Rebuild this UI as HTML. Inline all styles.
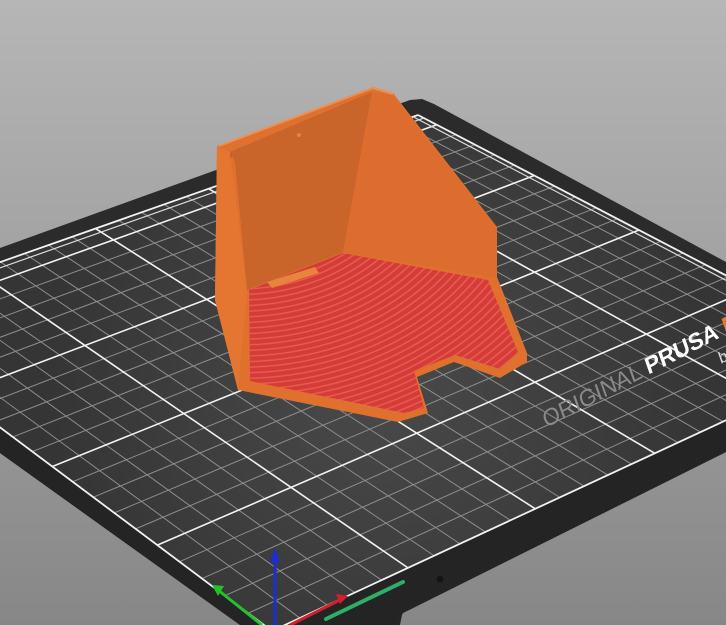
<!DOCTYPE html>
<html><head><meta charset="utf-8">
<style>
html,body{margin:0;padding:0;width:726px;height:625px;overflow:hidden;}
svg{display:block}
</style></head>
<body>
<svg id="s" width="726" height="625" viewBox="0 0 726 625" xmlns="http://www.w3.org/2000/svg">
<defs>
<linearGradient id="bg" x1="0" y1="0" x2="0" y2="1">
<stop offset="0" stop-color="#b6b6b6"/><stop offset="1" stop-color="#878787"/>
</linearGradient>
<radialGradient id="surf" cx="380" cy="380" r="330" gradientUnits="userSpaceOnUse">
<stop offset="0" stop-color="#4a4a4a"/><stop offset="1" stop-color="#353535"/>
</radialGradient>
<radialGradient id="rings" cx="240" cy="150" r="7" gradientUnits="userSpaceOnUse" spreadMethod="repeat" gradientTransform="translate(240 150) scale(1 0.8) translate(-240 -150)">
<stop offset="0" stop-color="#d63c37"/><stop offset="0.6" stop-color="#d63c37"/><stop offset="0.8" stop-color="#e9645a"/><stop offset="1" stop-color="#d63c37"/>
</radialGradient>
<clipPath id="gc"><polygon id="gq" points="0,0"/></clipPath>
</defs>
<rect width="726" height="625" fill="url(#bg)"/>
<polygon points="360,600 405,600 400,625 360,625" fill="#262626"/>
<polygon points="0,248 410,100 422,99 434,104 726,262 726,452 403,613 396,625 240,625 0,453" fill="#2b2b2b"/>
<polygon points="0,427 272,631 726,420 726,452 403,613 396,625 240,625 0,453" fill="#242424"/>
<polygon id="surface" points="0,0" fill="url(#surf)"/>
<g id="grid" clip-path="url(#gc)"></g>
<g id="border"></g>
<g transform="translate(546,428) rotate(-27.5) skewX(-8)">
<text x="0" y="0" font-family="Liberation Sans, sans-serif" font-size="23" fill="#8a8a8a">ORIGINAL <tspan fill="#ffffff" font-weight="bold">PRUSA</tspan> <tspan fill="#ee7a20" font-weight="bold">MK3</tspan></text>
<text x="188" y="24" font-family="Liberation Sans, sans-serif" font-size="16" fill="#dddddd">by Josef Prusa</text>
</g>
<line x1="326" y1="619" x2="403" y2="582" stroke="#2fae6a" stroke-width="4" stroke-linecap="round"/>
<circle cx="440" cy="579" r="3.5" fill="#151515"/>
<polygon points="217,146 373,87 393,93 497,227 497,277 527,353 527,362 500,378 454,362 417,377 428,413 398,422 238,390 215,300" fill="#e0702e"/>
<polygon points="230,152 372,92 343,252 247,290 235,162" fill="#c9642b"/>
<polygon points="372,92 392,95 497,228 497,278 343,252" fill="#dd6d2f"/>
<polyline points="219,146 373,88 393,94" fill="none" stroke="#f09050" stroke-width="2"/>
<polygon points="222,150 232,154 230,165" fill="#d8443a"/>
<polygon points="217,146 230,152 247,290 238,390 215,300" fill="#e47632"/>
<polygon points="249,290 343,253 488,280 518,352 500,369 455,355 414,371 424,408 404,413 250,381" fill="url(#rings)"/>
<polygon points="267,282 315,267 319,273 272,288" fill="#e8843c"/>
<circle cx="299" cy="135" r="2" fill="#e8843c"/>
<line x1="275" y1="625" x2="275" y2="560" stroke="#1a2fd0" stroke-width="3"/>
<polygon points="270,562 280,562 275,548" fill="#1a2fd0"/>
<line x1="262" y1="625" x2="218" y2="590" stroke="#22c22a" stroke-width="3"/>
<polygon points="212,585 224,586 218,596" fill="#22c22a"/>
<line x1="290" y1="625" x2="340" y2="600" stroke="#d0202a" stroke-width="3"/>
<polygon points="348,596 336,594 340,604" fill="#d0202a"/>
<script>
(function(){
var P=[[272,631],[873,352],[418,115],[-150,315]];
var x0=P[0][0],y0=P[0][1],x1=P[1][0],y1=P[1][1],x2=P[2][0],y2=P[2][1],x3=P[3][0],y3=P[3][1];
var dx1=x1-x2,dx2=x3-x2,dx3=x0-x1+x2-x3,dy1=y1-y2,dy2=y3-y2,dy3=y0-y1+y2-y3;
var den=dx1*dy2-dx2*dy1;
var g=(dx3*dy2-dx2*dy3)/den,h=(dx1*dy3-dx3*dy1)/den;
var a=x1-x0+g*x1,b=x3-x0+h*x3,c=x0,d=y1-y0+g*y1,e=y3-y0+h*y3,f=y0;
function m(u,v){var w=g*u+h*v+1;return [(a*u+b*v+c)/w,(d*u+e*v+f)/w];}
var pts=P.map(function(p){return p.join(',')}).join(' ');
document.getElementById('gq').setAttribute('points',pts);
document.getElementById('surface').setAttribute('points',pts);
var NS='http://www.w3.org/2000/svg',G=document.getElementById('grid'),B=document.getElementById('border');
function ln(par,p,q,col,w){var l=document.createElementNS(NS,'line');l.setAttribute('x1',p[0]);l.setAttribute('y1',p[1]);l.setAttribute('x2',q[0]);l.setAttribute('y2',q[1]);l.setAttribute('stroke',col);l.setAttribute('stroke-width',w);par.appendChild(l);}
var i;
for(i=1;i<25;i++){if(i%5)ln(G,m(i/25,0),m(i/25,1),'#8e8e8e',1);}
for(i=1;i<21;i++){if(i%5)ln(G,m(0,i/21),m(1,i/21),'#8e8e8e',1);}
for(i=5;i<25;i+=5){ln(G,m(i/25,0),m(i/25,1),'#f2f2f2',1.6);}
for(i=5;i<21;i+=5){ln(G,m(0,i/21),m(1,i/21),'#f2f2f2',1.6);}
ln(B,m(0,0),m(1,0),'#f2f2f2',1.8);ln(B,m(1,0),m(1,1),'#f2f2f2',1.8);
ln(B,m(1,1),m(0,1),'#f2f2f2',1.8);ln(B,m(0,1),m(0,0),'#f2f2f2',1.8);
ln(B,m(0,0.985),m(1,0.985),'#dcdcdc',1.2);ln(B,m(0.99,0),m(0.99,1),'#dcdcdc',1.2);
})();
</script>
</svg>
</body></html>
